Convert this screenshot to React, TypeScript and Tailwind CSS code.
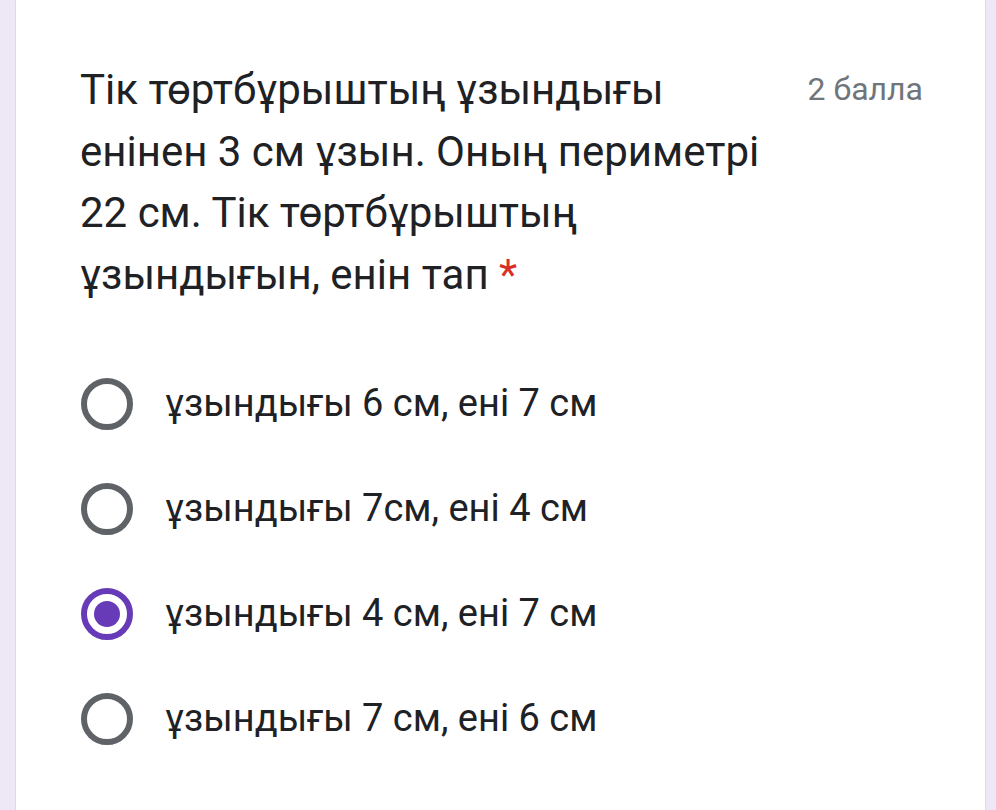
import React from 'react';

const options = [
    'ұзындығы 6 см, ені 7 см',
    'ұзындығы 7см, ені 4 см',
    'ұзындығы 4 см, ені 7 см',
    'ұзындығы 7 см, ені 6 см',
];

const Radio: React.FC<{ checked: boolean }> = ({ checked }) => (
    <div
        className={`w-[52px] h-[52px] rounded-full border-[6px] flex items-center justify-center shrink-0 ${
            checked ? 'border-[#673ab7]' : 'border-[#5f6368]'
        }`}
    >
        {checked && <div className="w-[26px] h-[26px] rounded-full bg-[#673ab7]" />}
    </div>
);

export default function App() {
    const selected = 2;

    return (
        <div className="w-[996px] h-[810px] bg-[#ede7f6] pl-[15px] pr-[10px] overflow-hidden font-['Roboto',sans-serif]">
            <div className="h-[870px] -mt-[20px] bg-white rounded-[22px] border border-[#dadce0] pt-[78px] pl-[64px] pr-[62px]">
                <div className="flex items-start justify-between">
                    <h2 className="text-[42px] leading-[61.5px] text-[#202124] whitespace-nowrap">
                        Тік төртбұрыштың ұзындығы
                        <br />
                        енінен 3 см ұзын. Оның периметрі
                        <br />
                        22 см. Тік төртбұрыштың
                        <br />
                        ұзындығын, енін тап <span className="text-[#d93025]">*</span>
                    </h2>
                    <span className="text-[32px] leading-[61.5px] text-[#70757a] whitespace-nowrap">2 балла</span>
                </div>

                <div className="mt-[46px] flex flex-col">
                    {options.map((opt, i) => (
                        <label key={i} className="h-[105px] flex items-center gap-[32px] pl-[1px]">
                            <Radio checked={i === selected} />
                            <span className="text-[38px] text-[#202124]">{opt}</span>
                        </label>
                    ))}
                </div>
            </div>
        </div>
    );
}
